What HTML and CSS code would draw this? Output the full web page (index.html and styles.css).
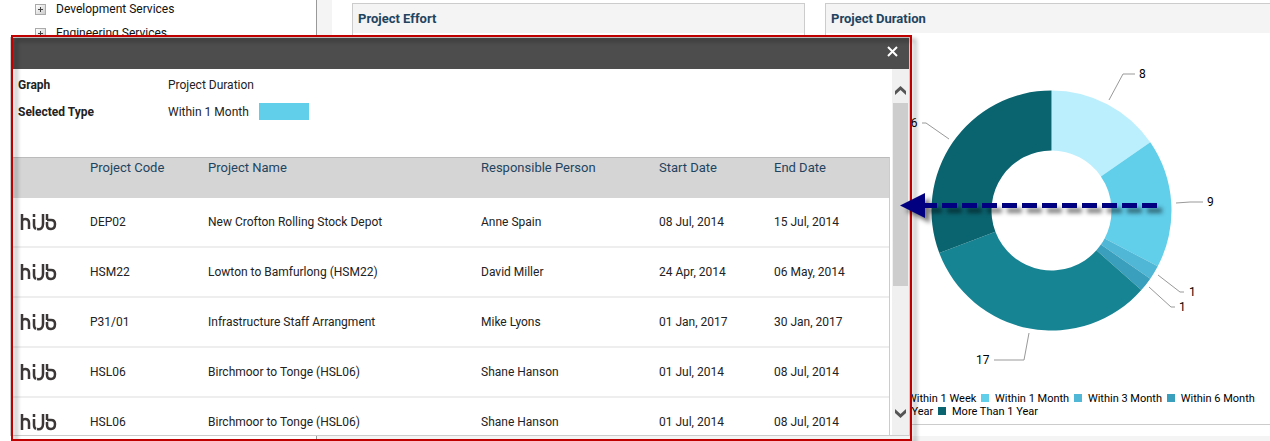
FILE: index.html
```html
<!DOCTYPE html>
<html lang="en">
<head>
    <meta charset="UTF-8">
    <meta name="viewport" content="width=device-width, initial-scale=1.0">
    <title>Project Dashboard</title>
    <link rel="stylesheet" href="styles.css">
</head>
<body>
    <div class="page">
        <nav class="sidebar">
            <ul class="tree">
                <li><button class="expand" aria-label="Expand Development Services"></button><a href="#">Development Services</a></li>
                <li><button class="expand" aria-label="Expand Engineering Services"></button><a href="#">Engineering Services</a></li>
            </ul>
        </nav>

        <main class="content">
            <div class="cards">
                <section class="card">
                    <h2>Project Effort</h2>
                </section>
                <section class="card">
                    <h2>Project Duration</h2>
                    <svg class="donut" width="401" height="359" viewBox="0 0 401 359">
                        <g id="slices"></g>
                        <g class="leaders">
                            <path d="M258 67L272 41H284"/>
                            <path d="M325 170L339 169H352"/>
                            <path d="M307 242L329 259H333"/>
                            <path d="M298 254L320 274H324"/>
                            <path d="M178 300L173 327H143"/>
                            <path d="M98 106L75 90H71"/>
                        </g>
                        <text x="288" y="45">8</text>
                        <text x="356" y="173">9</text>
                        <text x="338" y="263">1</text>
                        <text x="328" y="278">1</text>
                        <text x="125" y="331">17</text>
                        <text x="53" y="94">16</text>
                    </svg>
                    <ul class="legend">
                        <li><i class="week"></i>Within 1 Week</li>
                        <li><i class="month"></i>Within 1 Month</li>
                        <li><i class="month3"></i>Within 3 Month</li>
                        <li><i class="month6"></i>Within 6 Month</li>
                        <li><i class="year"></i>Within 1 Year</li>
                        <li><i class="more"></i>More Than 1 Year</li>
                    </ul>
                </section>
            </div>
            <div class="next-row"></div>
        </main>

        <div class="dialog" role="dialog" aria-label="Project Duration">
            <div class="dialog-bar">
                <button class="close" aria-label="Close">
                    <svg width="11" height="11" viewBox="0 0 11 11"><path d="M1 1L10 10M10 1L1 10"/></svg>
                </button>
            </div>
            <div class="dialog-body">
                <div class="dialog-content">
                    <dl class="details">
                        <dt>Graph</dt>
                        <dd>Project Duration</dd>
                        <dt>Selected Type</dt>
                        <dd>Within 1 Month <span class="swatch"></span></dd>
                    </dl>
                    <table class="projects">
                        <thead>
                            <tr>
                                <th class="col-logo"></th>
                                <th class="col-code">Project Code</th>
                                <th>Project Name</th>
                                <th class="col-person">Responsible Person</th>
                                <th class="col-date">Start Date</th>
                                <th class="col-date">End Date</th>
                            </tr>
                        </thead>
                        <tbody>
                            <tr>
                                <td><svg class="logo"><use href="#hub"/></svg></td>
                                <td>DEP02</td>
                                <td>New Crofton Rolling Stock Depot</td>
                                <td>Anne Spain</td>
                                <td>08 Jul, 2014</td>
                                <td>15 Jul, 2014</td>
                            </tr>
                            <tr>
                                <td><svg class="logo"><use href="#hub"/></svg></td>
                                <td>HSM22</td>
                                <td>Lowton to Bamfurlong (HSM22)</td>
                                <td>David Miller</td>
                                <td>24 Apr, 2014</td>
                                <td>06 May, 2014</td>
                            </tr>
                            <tr>
                                <td><svg class="logo"><use href="#hub"/></svg></td>
                                <td>P31/01</td>
                                <td>Infrastructure Staff Arrangment</td>
                                <td>Mike Lyons</td>
                                <td>01 Jan, 2017</td>
                                <td>30 Jan, 2017</td>
                            </tr>
                            <tr>
                                <td><svg class="logo"><use href="#hub"/></svg></td>
                                <td>HSL06</td>
                                <td>Birchmoor to Tonge (HSL06)</td>
                                <td>Shane Hanson</td>
                                <td>01 Jul, 2014</td>
                                <td>08 Jul, 2014</td>
                            </tr>
                            <tr>
                                <td><svg class="logo"><use href="#hub"/></svg></td>
                                <td>HSL06</td>
                                <td>Birchmoor to Tonge (HSL06)</td>
                                <td>Shane Hanson</td>
                                <td>01 Jul, 2014</td>
                                <td>08 Jul, 2014</td>
                            </tr>
                        </tbody>
                    </table>
                </div>
                <div class="scrollbar">
                    <button class="scroll-btn" aria-label="Scroll up">
                        <svg width="11" height="10" viewBox="0 0 11 10"><path d="M0 9V5L5.500 0L11 5V9L5.500 4Z"/></svg>
                    </button>
                    <div class="thumb"></div>
                    <button class="scroll-btn down" aria-label="Scroll down">
                        <svg width="11" height="10" viewBox="0 0 11 10"><path d="M0 0V4L5.500 9L11 4V0L5.500 5Z"/></svg>
                    </button>
                </div>
            </div>
        </div>

        <div class="frame"></div>
        <svg class="arrow" width="257" height="25" viewBox="0 0 257 25">
            <path d="M0 12.500L25 0V25Z"/>
            <path class="dashes" d="M257 12.500H20"/>
        </svg>
    </div>

    <svg class="defs">
        <symbol id="hub" viewBox="0 0 37 18">
            <g fill="none" stroke="#3c3838" stroke-width="2.500">
                <path d="M2 1V17M2 8Q3 6 5 6Q9 6 9 10V16"/>
                <path d="M14 1V4M14 6V12Q14 15 16 16M17 16Q23 17 23 11V1"/>
                <path d="M27 1V7M27 9V12Q27 16 31 16Q35 16 35 11Q35 7 31 7H27"/>
            </g>
        </symbol>
    </svg>

    <script>
        const slices = [
            { count: 8, color: "#bceffd" },
            { count: 9, color: "#61ceea" },
            { count: 1, color: "#50b8d6" },
            { count: 1, color: "#3a9fbc" },
            { count: 17, color: "#178494" },
            { count: 16, color: "#0a6470" }
        ];
        const total = slices.reduce((sum, s) => sum + s.count, 0);
        const cx = 200.5, cy = 177.5, outer = 120, inner = 60;

        function point(radius, count) {
            const angle = count / total * 2 * Math.PI;
            return (cx + radius * Math.sin(angle)) + " " + (cy - radius * Math.cos(angle));
        }

        let start = 0;
        let paths = "";
        slices.forEach(s => {
            const end = start + s.count;
            paths += `<path fill="${s.color}" d="M${point(outer, start)}
                A${outer} ${outer} 0 0 1 ${point(outer, end)}
                L${point(inner, end)}
                A${inner} ${inner} 0 0 0 ${point(inner, start)}Z"/>`;
            start = end;
        });
        document.getElementById("slices").innerHTML = paths;
    </script>
</body>
</html>
```

FILE: styles.css
```css
* {
    box-sizing: border-box;
    margin: 0;
    padding: 0;
}

body {
    font-family: Roboto, Arial, sans-serif;
    font-size: 12px;
    color: #222;
    background: white;
}

button {
    border: none;
    background: none;
    cursor: pointer;
}

ul {
    list-style: none;
}

.page {
    position: relative;
    display: flex;
    height: 100vh;
    overflow: hidden;
}

/* Sidebar tree */
.sidebar {
    flex: 0 0 317px;
    border-right: 1px solid #999;
}

.tree {
    padding-left: 35px;
}

.tree li {
    display: flex;
    align-items: center;
    gap: 10px;
    height: 24px;
    margin-top: -3px;
    margin-bottom: 3px;
}

.tree a {
    color: #111;
    text-decoration: none;
}

.expand {
    width: 11px;
    height: 11px;
    border: 1px solid #aaa;
    background:
        linear-gradient(#444, #444) center / 5px 1px no-repeat,
        linear-gradient(#444, #444) center / 1px 5px no-repeat,
        linear-gradient(135deg, #fff, #ccc);
}

/* Cards */
.content {
    flex: 1;
    min-width: 0;
    border-left: 15px solid #f4f4f4;
}

.cards {
    display: grid;
    grid-template-columns: 1fr 1fr;
    gap: 20px;
    padding: 3px 0 0 20px;
    margin-right: -8px;
}

.card {
    border: 1px solid #ccc;
}

.card h2 {
    height: 29px;
    padding-left: 5px;
    line-height: 29px;
    font-size: 13px;
    color: #1f4460;
    background: #f4f4f4;
}

.donut {
    display: block;
    margin: 0 auto;
}

.donut text {
    font-size: 12px;
    fill: #000;
}

.leaders {
    fill: none;
    stroke: #999;
}

.legend {
    padding: 0 0 6px 27px;
    text-indent: 38px;
    font-size: 11px;
    line-height: 13px;
    color: #000;
}

.legend li {
    display: inline-block;
    vertical-align: top;
    text-indent: 0;
}

.legend i {
    display: inline-block;
    width: 8px;
    height: 8px;
    margin-right: 6px;
    margin-left: 2px;
}

.week { background: #bceffd; }
.month { background: #61ceea; }
.month3 { background: #50b8d6; }
.month6 { background: #3a9fbc; }
.year { background: #178494; }
.more { background: #0a6470; }

.next-row {
    height: 29px;
    margin-top: 11px;
    background: #f4f4f4;
}

/* Dialog over the dashboard */
.dialog {
    position: absolute;
    top: 37px;
    right: 360px;
    bottom: 5px;
    left: 10px;
    display: flex;
    flex-direction: column;
    border: 1px solid #ccc;
    background: white;
}

.dialog-bar {
    flex: 0 0 31px;
    display: flex;
    align-items: center;
    justify-content: flex-end;
    padding: 0 11px 4px 0;
    background: #4d4d4d;
}

.close {
    display: flex;
}

.close path {
    stroke: white;
    stroke-width: 2;
}

.dialog-body {
    flex: 1;
    min-height: 0;
    display: flex;
}

.dialog-content {
    flex: 1;
    overflow: hidden;
    padding: 2px 2px 0;
}

.details {
    display: grid;
    grid-template-columns: 150px 1fr;
    grid-auto-rows: 27px;
    align-items: center;
    padding-left: 5px;
    margin-bottom: 32px;
}

.details dt {
    font-weight: bold;
}

.details dd {
    display: flex;
    align-items: center;
    gap: 10px;
}

.swatch {
    width: 50px;
    height: 17px;
    background: #61ceea;
}

.projects {
    width: 100%;
    table-layout: fixed;
    border-spacing: 0;
    border-top: 1px solid #bbb;
    border-right: 1px solid #ccc;
}

.projects th {
    height: 40px;
    padding-top: 2px;
    vertical-align: top;
    text-align: left;
    font-size: 13px;
    font-weight: normal;
    color: #1f4460;
    background: #d5d5d5;
}

.projects td {
    height: 50px;
    border-bottom: 2px solid #eee;
}

.col-logo { width: 77px; }
.col-code { width: 118px; }
.col-person { width: 178px; }
.col-date { width: 115px; }

.logo {
    display: block;
    width: 37px;
    height: 18px;
    margin-left: 7px;
}

.defs {
    display: none;
}

/* Scrollbar */
.scrollbar {
    flex: 0 0 17px;
    display: flex;
    flex-direction: column;
    padding: 13px 0;
    background: #f0f0f0;
}

.scroll-btn {
    display: flex;
    align-items: center;
    justify-content: center;
    height: 17px;
    margin-bottom: 4px;
}

.scroll-btn path {
    fill: #555;
}

.scroll-btn.down {
    margin: auto 0 0;
}

.thumb {
    height: 183px;
    margin: 0 1px;
    background: #cdcdcd;
}

/* Callout marks */
.frame {
    position: absolute;
    top: 35px;
    right: 358px;
    bottom: 0;
    left: 11px;
    border: 2px solid #c00000;
    filter: drop-shadow(4px 4px 2px rgba(0, 0, 0, 0.4));
    pointer-events: none;
}

.arrow {
    position: absolute;
    top: 193px;
    right: 113px;
    overflow: visible;
    fill: #000080;
    filter: drop-shadow(5px 5px 2px rgba(0, 0, 0, 0.5));
    pointer-events: none;
}

.dashes {
    stroke: #000080;
    stroke-width: 5;
    stroke-dasharray: 15 5;
}
```
